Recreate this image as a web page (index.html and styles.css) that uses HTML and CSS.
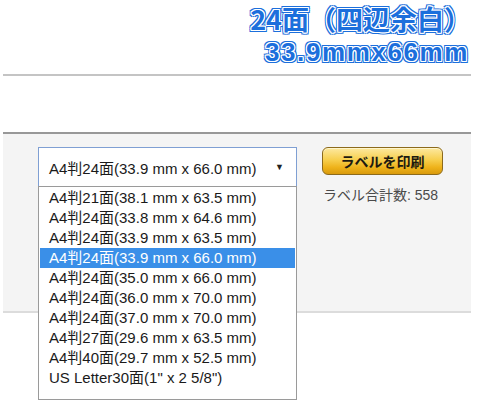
FILE: index.html
```html
<!DOCTYPE html>
<html lang="ja">
<head>
<meta charset="utf-8">
<link rel="stylesheet" href="styles.css">
</head>
<body>
<div class="page">
  <div class="title">
    <div class="title-line">24面（四辺余白）</div>
    <div class="title-line line2">33.9mmx66mm</div>
  </div>
  <div class="rule-thin"></div>
  <div class="spacer"></div>
  <div class="panel">
    <div class="select-wrap">
      <div class="select">
        <span>A4判24面(33.9 mm x 66.0 mm)</span>
        <span class="arrow">▼</span>
      </div>
      <ul class="list">
        <li>A4判21面(38.1 mm x 63.5 mm)</li>
        <li>A4判24面(33.8 mm x 64.6 mm)</li>
        <li>A4判24面(33.9 mm x 63.5 mm)</li>
        <li class="active">A4判24面(33.9 mm x 66.0 mm)</li>
        <li>A4判24面(35.0 mm x 66.0 mm)</li>
        <li>A4判24面(36.0 mm x 70.0 mm)</li>
        <li>A4判24面(37.0 mm x 70.0 mm)</li>
        <li>A4判27面(29.6 mm x 63.5 mm)</li>
        <li>A4判40面(29.7 mm x 52.5 mm)</li>
        <li>US Letter30面(1" x 2 5/8")</li>
      </ul>
    </div>
    <div class="side">
      <div class="print-btn">ラベルを印刷</div>
      <div class="count">ラベル合計数: 558</div>
    </div>
  </div>
</div>
</body>
</html>
```

FILE: styles.css
```css
* { box-sizing: border-box; }
html, body { margin: 0; padding: 0; background: #fff; }
.page {
  width: 483px;
  height: 412px;
  overflow: hidden;
  padding: 0 12px 0 3px;
}
.title {
  display: flex;
  flex-direction: column;
  align-items: flex-end;
  gap: 6px;
  padding-top: 5px;
  padding-right: 0;
  font-family: "Noto Sans CJK JP", "Noto Sans", sans-serif;
  font-weight: 700;
  color: #1c6fdc;
  text-shadow:
    1px 0 0 #fff, -1px 0 0 #fff, 0 1px 0 #fff, 0 -1px 0 #fff,
    1px 1px 0 #fff, -1px -1px 0 #fff, 1px -1px 0 #fff, -1px 1px 0 #fff,
    2px 0 0 #1c6fdc, -2px 0 0 #1c6fdc, 0 2px 0 #1c6fdc, 0 -2px 0 #1c6fdc,
    2px 2px 0 #1c6fdc, -2px -2px 0 #1c6fdc, 2px -2px 0 #1c6fdc, -2px 2px 0 #1c6fdc;
}
.title-line {
  font-size: 27px;
  line-height: 28px;
}
.title-line.line2 {
  font-family: "Liberation Sans", sans-serif;
  font-size: 26px;
  line-height: 26px;
  letter-spacing: 1.6px;
  padding-right: 2px;
}
.rule-thin {
  margin-top: 9px;
  height: 2px;
  background: #c4c4c4;
}
.spacer { height: 56px; }
.panel {
  position: relative;
  height: 181px;
  border-top: 2px solid #989898;
  border-bottom: 2px solid #dcdcdc;
  background: #f4f4f4;
  display: flex;
  gap: 25px;
  padding: 13px 0 0 35px;
  font-family: "Liberation Sans", "Noto Sans CJK JP", sans-serif;
}
.select-wrap {
  position: relative;
  width: 259px;
}
.select {
  height: 40px;
  background: #fff;
  border: 1px solid #7f9fd3;
  display: flex;
  align-items: center;
  justify-content: space-between;
  padding: 0 12px 0 10px;
  font-size: 15px;
  color: #1a1a1a;
}
.arrow { font-size: 9px; color: #222; }
.list {
  position: absolute;
  left: 0;
  top: 39px;
  width: 259px;
  margin: 0;
  padding: 1px 1px 11px 1px;
  list-style: none;
  background: #fff;
  border: 1px solid #9a9a9a;
  z-index: 2;
}
.list li {
  height: 20px;
  line-height: 20px;
  padding-left: 9px;
  font-size: 15px;
  color: #1a1a1a;
  white-space: nowrap;
}
.list li.active {
  background: #3a8fe8;
  color: #fff;
}
.side {
  display: flex;
  flex-direction: column;
  gap: 9px;
}
.print-btn {
  width: 121px;
  height: 28px;
  border: 1px solid #8c6a1c;
  border-radius: 6px;
  background: linear-gradient(#fde9a0 0%, #f7cf4e 45%, #eeb21a 75%, #d99a0c 100%);
  box-shadow: inset 0 1px 0 #fff6cc;
  display: flex;
  align-items: center;
  justify-content: center;
  font-family: "Noto Sans CJK JP", sans-serif;
  font-weight: 700;
  font-size: 14px;
  color: #1e1a10;
}
.count {
  font-size: 14px;
  color: #4a4a4a;
  padding-left: 1px;
}
```
